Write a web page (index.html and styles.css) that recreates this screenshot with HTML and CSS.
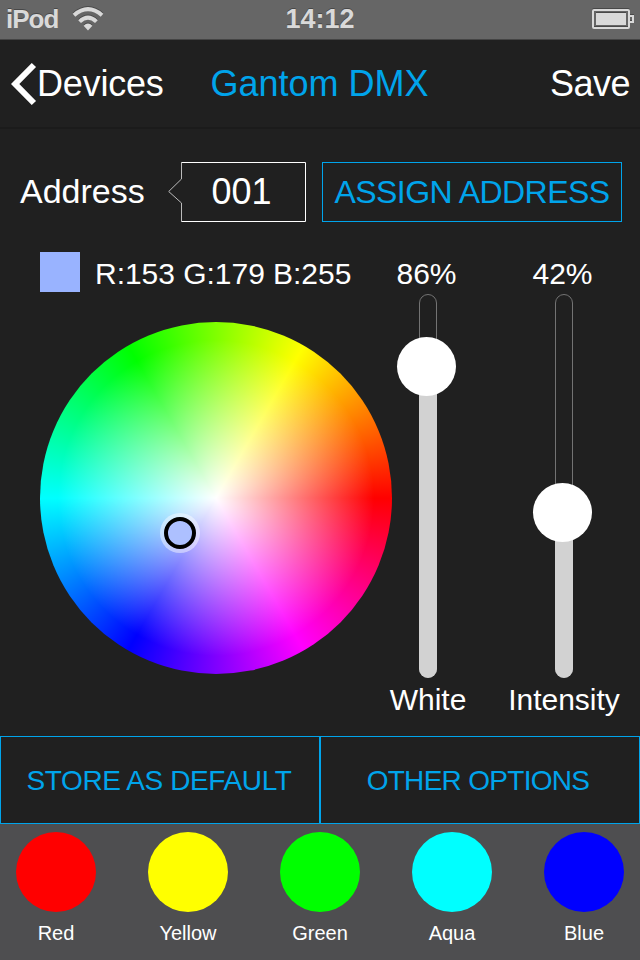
FILE: index.html
```html
<!DOCTYPE html>
<html lang="en">
<head>
<meta charset="utf-8">
<title>Gantom DMX</title>
<link rel="stylesheet" href="styles.css">
</head>
<body>
<div class="status">
  <div class="status-left"><span class="carrier">iPod</span>
    <svg class="wifi" width="32" height="24" viewBox="0 0 32 24" fill="none" stroke="#d9d9d9" stroke-width="4">
      <path d="M2 8.2 Q16 -3.8 30 8.2"/><path d="M7.6 14.6 Q16 6.8 24.4 14.6"/><path d="M16 23.6 L11.6 18.8 Q16 14.2 20.4 18.8 Z" fill="#d9d9d9" stroke="none"/>
    </svg>
  </div>
  <time class="clock">14:12</time>
  <svg class="battery" width="42" height="20" viewBox="0 0 42 20" fill="none" stroke="#d9d9d9" stroke-width="2">
    <rect x="1" y="1" width="36" height="18" rx="1"/><path d="M38 7h3v6h-3"/><rect x="4" y="4" width="30" height="12" fill="#d9d9d9" stroke="none"/>
  </svg>
</div>
<header class="nav">
  <a class="back"><svg width="26" height="44" viewBox="0 0 26 44" fill="none" stroke="#fff" stroke-width="6"><path d="M22.9 3 L4.2 22 L22.9 41"/></svg><span>Devices</span></a>
  <h1 class="title">Gantom DMX</h1>
  <a class="save">Save</a>
</header>
<section class="address">
  <span class="address-label">Address</span>
  <div class="address-field">
    <svg class="field-shape" width="138" height="60" viewBox="0 0 138 60" fill="none" stroke="#fff" stroke-width="1"><path d="M14 .5H137.5V59.5H14"/><path stroke="#bbb" d="M13.5 0V17L.7 29.5L13.5 41V60"/></svg>
    <span class="field-value">001</span>
  </div>
  <button class="assign">ASSIGN ADDRESS</button>
</section>
<main class="controls">
  <section class="picker">
    <div class="rgb"><span class="chip"></span><span class="rgb-value">R:153 G:179 B:255</span></div>
    <div class="wheel"><span class="marker"></span></div>
  </section>
  <section class="slider white">
    <span class="percent">86%</span>
    <div class="track"><span class="fill"></span><span class="knob"></span></div>
    <span class="name">White</span>
  </section>
  <section class="slider intensity">
    <span class="percent">42%</span>
    <div class="track"><span class="fill"></span><span class="knob"></span></div>
    <span class="name">Intensity</span>
  </section>
</main>
<div class="actions"><button class="store">STORE AS DEFAULT</button><button class="other">OTHER OPTIONS</button></div>
<footer class="presets">
  <div class="preset red"><i></i><span>Red</span></div>
  <div class="preset yellow"><i></i><span>Yellow</span></div>
  <div class="preset green"><i></i><span>Green</span></div>
  <div class="preset aqua"><i></i><span>Aqua</span></div>
  <div class="preset blue"><i></i><span>Blue</span></div>
</footer>
</body>
</html>
```
FILE: styles.css
```css
* { box-sizing: border-box; }
body {
  margin: 0; width: 640px; height: 960px; overflow: hidden;
  display: flex; flex-direction: column;
  background: #202020; color: #fff;
  font-family: "Liberation Sans", Arial, sans-serif;
  white-space: nowrap;
}
h1 { margin: 0; font-weight: normal; }
button { font-family: inherit; background: none; border: 1px solid #00a4eb; color: #00a4eb; padding: 0; border-radius: 0; }
svg { display: block; flex: none; }

.status {
  height: 40px; flex: none; display: grid; grid-template-columns: 1fr auto 1fr; align-items: center;
  padding: 0 6px 2px; background: #666; border-bottom: 1px solid #444; color: #d9d9d9;
  font-weight: bold; font-size: 27px;
}
.status-left { display: flex; align-items: center; gap: 14px; }
.carrier { font-size: 26px; letter-spacing: -1px; }
.carrier, .wifi { margin-top: 1px; }
.clock { margin-top: 2px; }
.wifi, .battery { filter: drop-shadow(0 -1px 0 #484848); }
.carrier, .clock { text-shadow: 0 -1px 0 #484848; }
.battery { justify-self: end; }

.nav {
  height: 89px; flex: none; display: grid; grid-template-columns: 1fr auto 1fr; align-items: center;
  padding: 0 10px 0 11px; border-bottom: 2px solid #1b1b1b; font-size: 36px;
}
.back { display: flex; align-items: center; letter-spacing: -.2px; }
.title { font-size: 36px; color: #00a4eb; margin-right: 2px; }
.save { justify-self: end; letter-spacing: -.5px; }

.address { height: 60px; margin: 33px 18px 0 20px; flex: none; display: flex; align-items: center; }
.address-label { width: 148px; font-size: 34px; padding-bottom: 2px; }
.address-field { width: 138px; height: 60px; display: grid; }
.address-field > * { grid-area: 1 / 1; }
.field-value { place-self: center; font-size: 36px; padding-left: 9px; }
.assign { width: 300px; height: 60px; margin-left: 16px; font-size: 32px; letter-spacing: -.55px; }

.controls { height: 514px; flex: none; display: flex; padding: 30px 0 0 40px; font-size: 30px; }
.picker { width: 352px; }
.rgb { height: 40px; display: flex; align-items: center; gap: 15px; }
.rgb-value { padding-top: 3px; letter-spacing: -.03px; }
.chip { width: 40px; height: 40px; background: #99b3ff; }
.wheel {
  width: 352px; height: 352px; margin-top: 30px; border-radius: 50%; position: relative;
  background:
    radial-gradient(circle, #fff 0, rgba(255,255,255,0) 158px),
    conic-gradient(from 90deg, #f00, #f0f 60deg, #00f 120deg, #0ff 180deg, #0f0 240deg, #ff0 300deg, #f00);
}
.marker {
  position: absolute; left: 124px; top: 195px; width: 32px; height: 32px; border-radius: 50%;
  border: 4px solid #000; background: #adc0ff; box-shadow: 0 0 0 4px rgba(255,255,255,.45);
}
.slider { width: 136px; display: flex; flex-direction: column; align-items: center; }
.white { margin-left: -32px; }
.percent { height: 42px; line-height: 43px; margin-left: -3px; }
.track { width: 18px; height: 384px; border: 1px solid #737373; border-radius: 9px; position: relative; }
.fill { position: absolute; inset: auto -1px -1px; border-radius: 0 0 9px 9px; background: #d2d2d2; }
.knob { position: absolute; left: -23px; width: 59px; height: 59px; border-radius: 50%; background: #fff; }
.white .fill { height: 312px; }
.white .knob { top: 42px; }
.intensity .fill { height: 166px; }
.intensity .knob { top: 188px; }
.name { line-height: 44px; }

.actions { height: 88px; flex: none; display: grid; grid-template-columns: 1fr 1fr; }
.actions button { font-size: 28px; letter-spacing: -.4px; padding-top: 1px; }
.actions .store { padding-right: 2px; }
.actions .other { letter-spacing: -.7px; padding-right: 4px; }

.presets { flex: 1; display: flex; justify-content: space-between; padding: 8px 16px; background: #4e4e50; font-size: 20px; }
.preset { width: 80px; display: flex; flex-direction: column; align-items: center; gap: 10px; }
.preset i { width: 80px; height: 80px; border-radius: 50%; }
.red i { background: #f00; }
.yellow i { background: #ff0; }
.green i { background: #0f0; }
.aqua i { background: #0ff; }
.blue i { background: #00f; }
```
